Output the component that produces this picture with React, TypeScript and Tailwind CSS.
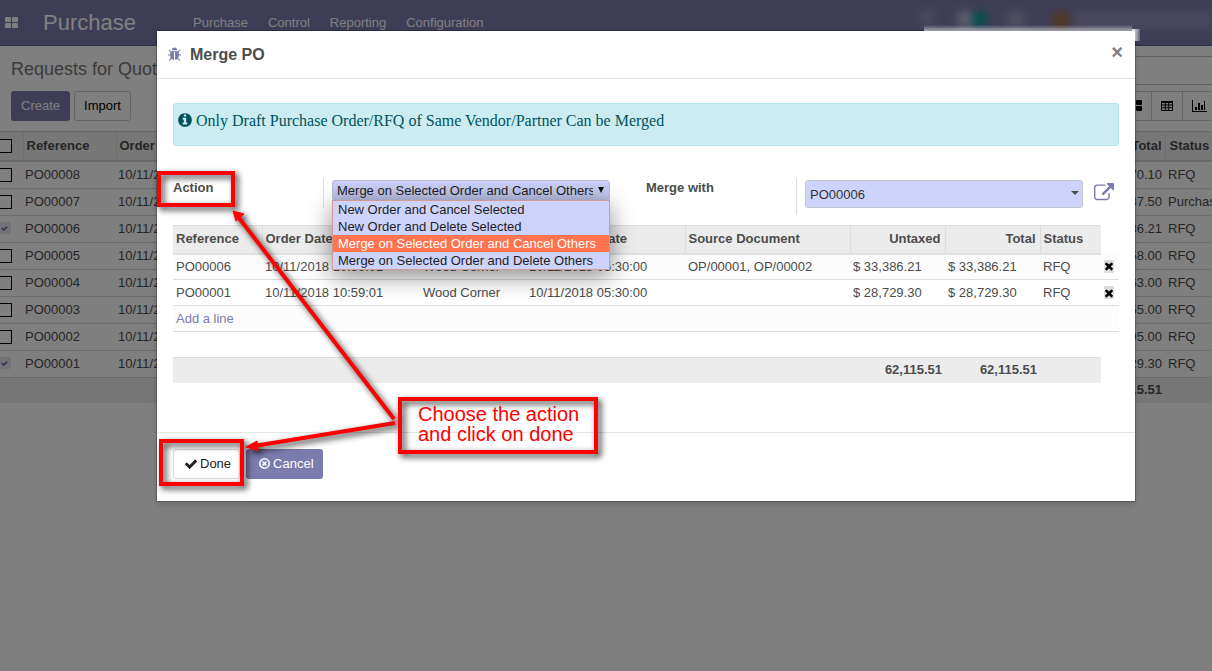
import type { ReactNode } from "react";

const PATHS = {
  check:
    "M1671 566q0 40-28 68l-724 724-136 136q-28 28-68 28t-68-28l-136-136-362-362q-28-28-28-68t28-68l136-136q28-28 68-28t68 28l294 295 656-657q28-28 68-28t68 28l136 136q28 28 28 68z",
  info: "M1152 1376v-160q0-14-9-23t-23-9h-96v-512q0-14-9-23t-23-9h-320q-14 0-23 9t-9 23v160q0 14 9 23t23 9h96v320h-96q-14 0-23 9t-9 23v160q0 14 9 23t23 9h448q14 0 23-9t9-23zm-128-896v-160q0-14-9-23t-23-9h-192q-14 0-23 9t-9 23v160q0 14 9 23t23 9h192q14 0 23-9t9-23zm640 416q0 209-103 385.5t-279.5 279.5-385.5 103-385.5-103-279.5-279.5-103-385.5 103-385.5 279.5-279.5 385.5-103 385.5 103 279.5 279.5 103 385.5z",
  external:
    "M1408 928v320q0 119-84.5 203.5t-203.5 84.5h-832q-119 0-203.5-84.5t-84.5-203.5v-832q0-119 84.5-203.5t203.5-84.5h704q14 0 23 9t9 23v64q0 14-9 23t-23 9h-704q-66 0-113 47t-47 113v832q0 66 47 113t113 47h832q66 0 113-47t47-113v-320q0-14 9-23t23-9h64q14 0 23 9t9 23zm384-864v512q0 26-19 45t-45 19-45-19l-176-176-652 652q-10 10-23 10t-23-10l-114-114q-10-10-10-23t10-23l652-652-176-176q-19-19-19-45t19-45 45-19h512q26 0 45 19t19 45z",
  times:
    "M1490 1322q0 40-28 68l-136 136q-28 28-68 28t-68-28l-294-294-294 294q-28 28-68 28t-68-28l-136-136q-28-28-28-68t28-68l294-294-294-294q-28-28-28-68t28-68l136-136q28-28 68-28t68 28l294 294 294-294q28-28 68-28t68 28l136 136q28 28 28 68t-28 68l-294 294 294 294q28 28 28 68z",
  bug: "M1696 960q0 26-19 45t-45 19h-224q0 171-67 290l208 209q19 19 19 45t-19 45q-18 19-45 19t-45-19l-198-197q-5 5-15 13t-42 28.5-65 36.5-82 29-97 13v-896h-128v896q-51 0-101.5-13.5t-87-33-66-39-43.5-32.5l-15-14-183 207q-20 21-48 21-24 0-43-16-19-18-20.5-44.5t15.5-46.5l202-227q-58-114-58-274h-224q-26 0-45-19t-19-45 19-45 45-19h224v-294l-173-173q-19-19-19-45t19-45 45-19 45 19l173 173h844l173-173q19-19 45-19t45 19 19 45-19 45l-173 173v294h224q26 0 45 19t19 45zm-480-576h-640q0-133 93.5-226.5t226.5-93.5 226.5 93.5 93.5 226.5z",
};

function Icon({ name, className }: { name: keyof typeof PATHS; className: string }) {
  return (
    <svg viewBox="0 0 1792 1792" fill="currentColor" className={className} aria-hidden="true">
      <path d={PATHS[name]} />
    </svg>
  );
}

function ThLarge({ className }: { className: string }) {
  return (
    <svg viewBox="0 0 14 12" fill="currentColor" className={className} aria-hidden="true">
      <rect x="0" y="0" width="6" height="5" rx="1" />
      <rect x="7" y="0" width="6" height="5" rx="1" />
      <rect x="0" y="6" width="6" height="5" rx="1" />
      <rect x="7" y="6" width="6" height="5" rx="1" />
    </svg>
  );
}

function TableIcon() {
  return (
    <svg viewBox="0 0 12 10" className="h-2.5 w-3" fill="none" stroke="currentColor" aria-hidden="true">
      <path d="M0.5 0v10M11.5 0v10M0 0.5h12M0 1.5h12M0 4h12M0 6.7h12M0 9.5h12M4.3 1v9M7.8 1v9" />
    </svg>
  );
}

function ChartIcon() {
  return (
    <svg viewBox="0 0 15 12" className="h-3 w-[15px]" fill="currentColor" aria-hidden="true">
      <path d="M0 0h1v11h14v1H0zM3 7h2v3H3zM6 3h2v7H6zM9 5h2v5H9zM12 1h1v9h-1z" />
    </svg>
  );
}

const orders = [
  { ref: "PO00008", total: "1,470.10", status: "RFQ", checked: false },
  { ref: "PO00007", total: "4,137.50", status: "Purchase Order", checked: false },
  { ref: "PO00006", total: "33,386.21", status: "RFQ", checked: true },
  { ref: "PO00005", total: "8,658.00", status: "RFQ", checked: false },
  { ref: "PO00004", total: "2,563.00", status: "RFQ", checked: false },
  { ref: "PO00003", total: "1,355.00", status: "RFQ", checked: false },
  { ref: "PO00002", total: "3,195.00", status: "RFQ", checked: false },
  { ref: "PO00001", total: "28,729.30", status: "RFQ", checked: true },
];

function RowCheckbox({ label, checked }: { label: string; checked: boolean }) {
  return (
    <span className="-ml-0.5 grid">
      <input
        type="checkbox"
        aria-label={label}
        defaultChecked={checked}
        className="peer col-start-1 row-start-1 size-3.5 appearance-none border border-black bg-white checked:h-3 checked:w-[13px] checked:rounded-xs checked:border-0 checked:bg-[#e4e4ee]"
      />
      <Icon
        name="check"
        className="pointer-events-none invisible col-start-1 row-start-1 m-[3px] size-[7px] text-[#5a599a] peer-checked:visible"
      />
    </span>
  );
}

function Navbar() {
  return (
    <header className="flex h-[46px] items-center border-b border-[#5f5e97] bg-[#7c7bad] text-[13px] text-white">
      <button type="button" aria-label="Applications" className="pl-[5px]">
        <ThLarge className="h-3 w-3.5" />
      </button>
      <span className="w-[150px] shrink-0 pl-6 text-[22px] leading-none">Purchase</span>
      <nav className="ml-6 flex flex-1 gap-5">
        <a href="#purchase">Purchase</a>
        <a href="#control">Control</a>
        <a href="#reporting">Reporting</a>
        <a href="#configuration">Configuration</a>
      </nav>
      <div className="flex h-6 items-start blur-[4px]" aria-hidden="true">
        <span className="mr-6 size-3.5 bg-white/20" />
        <span className="h-4 w-3.5 bg-white/50" />
        <span className="mr-5 size-4 rounded-full bg-[#00a09d]" />
        <span className="mr-7 size-4 bg-white/30" />
        <span className="mr-1 size-[18px] rounded-full bg-[#a8703c]" />
        <span className="mt-0.5 h-3.5 w-[138px] bg-white/20" />
      </div>
    </header>
  );
}

function ControlPanel() {
  return (
    <section className="flex h-[86px] justify-between border-b border-[#ccc] text-[13px]">
      <div className="pl-[11px] pt-3">
        <h1 className="text-lg leading-[22px] text-[#777]">Requests for Quotation</h1>
        <div className="mt-[11px] flex gap-1">
          <button type="button" className="h-[30px] rounded-[3px] bg-[#7c7bad] px-2.5 text-white">
            Create
          </button>
          <button type="button" className="h-[30px] rounded-[3px] border border-[#ccc] bg-white px-[9px] text-black">
            Import
          </button>
        </div>
      </div>
      <div className="flex flex-col items-end pt-2.5">
        <input
          type="search"
          aria-label="Search"
          className="h-[29px] w-[500px] border-y border-[#bbb] bg-white outline-none"
        />
        <div className="mt-1.5 flex h-[30px] border-y border-[#ccc] text-black">
          <button type="button" aria-label="Kanban" className="flex w-[31px] items-center border-r border-[#ccc] pl-2">
            <ThLarge className="h-3 w-3.5" />
          </button>
          <button type="button" aria-label="List" className="flex w-[31px] items-center justify-center border-r border-[#ccc]">
            <TableIcon />
          </button>
          <button type="button" aria-label="Graph" className="flex w-[29px] items-center pl-[9px]">
            <ChartIcon />
          </button>
        </div>
      </div>
    </section>
  );
}

function OrderList() {
  return (
    <table className="w-full table-fixed border-collapse text-[13px] leading-5 text-[#4c4c4c]">
      <colgroup>
        <col className="w-[23px]" />
        <col className="w-[93px]" />
        <col className="w-[160px]" />
        <col />
        <col className="w-[47px]" />
      </colgroup>
      <thead>
        <tr className="h-[29px] border-b-2 border-[#d5d5d5] bg-[#eee] text-left">
          <th className="border-r border-[#ddd]">
            <RowCheckbox label="Select all" checked={false} />
          </th>
          <th className="border-r border-[#ddd] pl-[3px]">Reference</th>
          <th className="pl-[3px]">Order Date</th>
          <th className="border-r border-[#ddd] pr-[3px] text-right">Total</th>
          <th className="pl-1">Status</th>
        </tr>
      </thead>
      <tbody>
        {orders.map((o) => (
          <tr key={o.ref} className="h-[27px] border-b border-[#d5d5d5]">
            <td>
              <RowCheckbox label={o.ref} checked={o.checked} />
            </td>
            <td className="pl-0.5">{o.ref}</td>
            <td className="pl-0.5">10/11/2018</td>
            <td className="pr-[3px] text-right">{o.total}</td>
            <td className="overflow-hidden whitespace-nowrap pl-[3px]">{o.status}</td>
          </tr>
        ))}
      </tbody>
      <tfoot>
        <tr className="h-[26px] bg-[#eee]">
          <td colSpan={4} className="pr-[3px] text-right font-bold">
            85,415.51
          </td>
          <td />
        </tr>
      </tfoot>
    </table>
  );
}

const actions = [
  "New Order and Cancel Selected",
  "New Order and Delete Selected",
  "Merge on Selected Order and Cancel Others",
  "Merge on Selected Order and Delete Others",
];

function Field({ id, label, height, children }: { id: string; label: string; height: string; children: ReactNode }) {
  return (
    <div className="flex items-start">
      <label htmlFor={id} className="w-[150px] shrink-0 text-[13px] leading-5 font-bold">
        {label}
      </label>
      <div className={`flex flex-1 items-start border-l border-[#ddd] pt-0.5 pl-2 ${height}`}>{children}</div>
    </div>
  );
}

const lines = [
  { ref: "PO00006", date: "10/11/2018 10:59:01", source: "OP/00001, OP/00002", amount: "$ 33,386.21" },
  { ref: "PO00001", date: "10/11/2018 10:59:01", source: "", amount: "$ 28,729.30" },
];

function LinesTable() {
  return (
    <table className="mt-2.5 w-full table-fixed border-collapse text-[13px] leading-5">
      <colgroup>
        <col className="w-[89px]" />
        <col className="w-[158px]" />
        <col className="w-[106px]" />
        <col className="w-[159px]" />
        <col />
        <col className="w-[95px]" />
        <col className="w-[95px]" />
        <col className="w-[61px]" />
        <col className="w-[18px]" />
      </colgroup>
      <thead>
        <tr className="h-7 text-left [&>th]:border-t [&>th]:border-b-2 [&>th+th]:border-l [&>th]:border-t-[#ddd] [&>th]:border-b-[#dee2e6] [&>th]:border-l-[#ddd] [&>th]:bg-[#ececec] [&>th]:pr-1 [&>th]:pl-[3px]">
          <th>Reference</th>
          <th>Order Date</th>
          <th>Vendor</th>
          <th>Scheduled Date</th>
          <th>Source Document</th>
          <th className="text-right">Untaxed</th>
          <th className="text-right">Total</th>
          <th>Status</th>
          <td />
        </tr>
      </thead>
      <tbody>
        {lines.map((l) => (
          <tr key={l.ref} className="h-[26px] border-b border-[#ddd] odd:bg-[#fcfcfc] [&>td]:pl-[3px]">
            <td>{l.ref}</td>
            <td>{l.date}</td>
            <td>Wood Corner</td>
            <td>10/11/2018 05:30:00</td>
            <td>{l.source}</td>
            <td>{l.amount}</td>
            <td>{l.amount}</td>
            <td>RFQ</td>
            <td>
              <button type="button" aria-label={`Remove ${l.ref}`} className="flex h-[13px] w-2.5 items-center justify-center bg-[#ddd] text-black">
                <Icon name="times" className="size-3 shrink-0" />
              </button>
            </td>
          </tr>
        ))}
        <tr className="h-[26px] border-b border-[#ddd] bg-[#fcfcfc]">
          <td colSpan={9} className="pl-[3px]">
            <a href="#add" className="text-[#7c7bad]">
              Add a line
            </a>
          </td>
        </tr>
        <tr className="h-[26px]">
          <td colSpan={9} />
        </tr>
      </tbody>
      <tfoot>
        <tr className="h-[25px] text-right font-bold [&>td]:border-t [&>td]:border-[#ddd] [&>td]:bg-[#ececec] [&>td]:pr-[3px]">
          <td colSpan={6}>62,115.51</td>
          <td>62,115.51</td>
          <td />
          <th />
        </tr>
      </tfoot>
    </table>
  );
}

function MergeDialog() {
  return (
    <div role="dialog" aria-labelledby="dialog-title" className="border border-black/20 border-t-[#2c2c3c] bg-white bg-clip-padding text-[#4c4c4c] shadow-md">
      <header className="flex h-12 items-center border-b border-[#e5e5e5] pr-3 pl-2.5">
        <Icon name="bug" className="size-[15px] text-[#7c7bad]" />
        <h2 id="dialog-title" className="ml-2 flex-1 text-base leading-6 font-bold">
          Merge PO
        </h2>
        <button type="button" aria-label="Close" className="pb-1.5 text-xl leading-5 font-bold text-[#808080]">
          ×
        </button>
      </header>
      <div className="px-4 pt-6 pb-[49px]">
        <p className="flex h-[43px] items-start gap-[3px] rounded-[3px] border border-[#b8e5ea] bg-[#cbecf0] px-[3px] pt-1.5 font-['Liberation_Serif',serif] text-base leading-[22px] text-[#00535e]">
          <Icon name="info" className="mt-[2px] size-4 shrink-0" />
          Only Draft Purchase Order/RFQ of Same Vendor/Partner Can be Merged
        </p>
        <div className="mt-8 grid grid-cols-2">
          <Field id="action" label="Action" height="h-[30px]">
            <div className="relative mr-9 flex-1">
              <select
                id="action"
                defaultValue={actions[2]}
                className="block h-[21px] w-full appearance-none rounded-[3px] border border-[#bbbccb] bg-linear-to-b from-[#cdd2fb] to-[#b9bee4] pr-4 pl-1 text-[13px] leading-[19px] text-[#222]"
              >
                {actions.map((a) => (
                  <option key={a}>{a}</option>
                ))}
              </select>
              <svg viewBox="0 0 6 6" className="pointer-events-none absolute top-[7px] right-1.5 size-1.5" aria-hidden="true">
                <path d="M0 0h6L3 6z" fill="#111" />
              </svg>
              <ul role="listbox" aria-label="Action" className="absolute inset-x-0 top-5 z-10 border border-[#d09a93] bg-[#ced3fc] text-[13px] leading-[17px] whitespace-nowrap text-[#222] shadow-[0_6px_24px_rgba(0,0,0,0.45)]">
                {actions.map((a, i) => (
                  <li key={a} role="option" aria-selected={i === 2} className="px-[5px] aria-selected:bg-[#ff7350] aria-selected:text-white">
                    {a}
                  </li>
                ))}
              </ul>
            </div>
          </Field>
          <Field id="merge-with" label="Merge with" height="h-[37px]">
            <div className="relative flex-1">
              <input
                id="merge-with"
                defaultValue="PO00006"
                className="block h-7 w-full rounded-[3px] border border-[#c5c6d0] bg-[#ced3fc] px-1 text-[13px] text-[#333]"
              />
              <svg viewBox="0 0 8 4" className="pointer-events-none absolute top-[11px] right-1 h-1 w-2" aria-hidden="true">
                <path d="M0 0h8L4 4z" fill="#4c4c4c" />
              </svg>
            </div>
            <button type="button" aria-label="Open record" className="w-9 pt-[3px] pl-[11px] text-[#7c7bad]">
              <Icon name="external" className="size-5" />
            </button>
          </Field>
        </div>
        <LinesTable />
      </div>
      <footer className="flex h-[69px] items-start gap-1.5 border-t border-[#e5e5e5] px-4 pt-4 text-[13px]">
        <button type="button" className="flex h-[30px] items-center gap-0.5 rounded-[3px] border border-[#d8dadf] bg-white pr-2 pl-2.5 text-[#222]">
          <Icon name="check" className="size-3.5" />
          Done
        </button>
        <button type="button" className="flex h-[30px] items-center gap-[3px] rounded-[3px] bg-[#7c7bad] pr-[9px] pl-[13px] text-white">
          <svg viewBox="0 0 12 12" className="size-[11px]" fill="none" stroke="currentColor" aria-hidden="true">
            <circle cx="6" cy="6" r="5.1" strokeWidth="1.7" />
            <path d="M4 4l4 4M8 4l-4 4" strokeWidth="2" />
          </svg>
          Cancel
        </button>
      </footer>
    </div>
  );
}

function Annotations() {
  return (
    <div className="pointer-events-none absolute inset-0 drop-shadow-[3px_3px_3px_rgba(0,0,0,0.8)]">
      <div className="absolute top-[171px] left-[157px] h-9 w-[78px] border-4 border-[#f00]" />
      <div className="absolute top-[439px] left-[159px] h-[47px] w-[85px] border-4 border-[#f00]" />
      <div className="absolute top-[397px] left-[398px] h-[57px] w-[200px] border-4 border-[#f00]" />
      <svg className="absolute top-0 left-0 h-[500px] w-[620px]" aria-hidden="true">
        <path d="M394 419L239 218M395 423L254 446" stroke="#f00" strokeWidth="4" />
        <path d="M233 211l11 3-8 7zM246 447l11-6 1 10z" fill="#f00" stroke="#f00" />
      </svg>
    </div>
  );
}

export default function App() {
  return (
    <div className="relative min-h-screen overflow-hidden bg-white font-['Liberation_Sans',Arial,sans-serif]">
      <Navbar />
      <ControlPanel />
      <OrderList />
      <div className="absolute inset-0 bg-black/50 pt-[30px] pr-[76px] pl-[156px]">
        <MergeDialog />
        <div className="absolute top-[25px] right-20 h-3 w-52 bg-linear-to-b from-[#3e3e57]/0 to-white to-90%" />
        <div className="absolute top-[29px] right-[72px] h-3 w-2 bg-linear-to-r from-white to-white/20" />
        <Annotations />
        <p className="absolute top-[404px] left-[418px] text-xl leading-5 text-[#f00]">
          Choose the action
          <br />
          and click on done
        </p>
      </div>
    </div>
  );
}
